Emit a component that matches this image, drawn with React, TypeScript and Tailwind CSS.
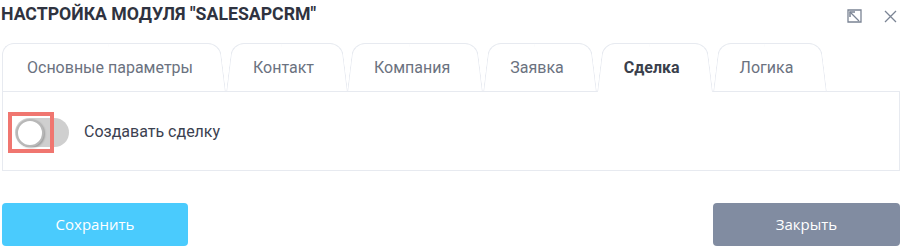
import React from "react";

const tabs = ["Основные параметры", "Контакт", "Компания", "Заявка", "Сделка", "Логика"];
const ACTIVE = 4;

function Tab({ label, index }: { label: string; index: number }) {
  const active = index === ACTIVE;
  const first = index === 0;
  return (
    <div
      className={`relative h-[49px] flex items-center ${first ? "pl-[25px]" : "pl-[27px]"} pr-[33px] ${
        active ? "z-10 bg-white" : ""
      }`}
    >
      <div className="absolute left-0 top-0 bottom-0 w-1/2 pointer-events-none">
        <div
          className={`absolute inset-0 border-l border-t border-[#e7eaf0] rounded-tl-[12px] origin-bottom ${
            first ? "" : "-skew-x-[7deg]"
          } bg-white`}
        />
      </div>
      <div className="absolute right-0 top-0 bottom-0 w-1/2 pointer-events-none">
        <div className="absolute inset-0 border-r border-t border-[#e7eaf0] rounded-tr-[12px] origin-bottom skew-x-[7deg] bg-white" />
      </div>
      {!active && <div className="absolute left-0 right-0 bottom-0 h-px bg-[#e7eaf0]" />}
      <span
        className={`relative text-[16px] leading-none whitespace-nowrap ${
          active ? "font-bold text-[#3a3f4c]" : "text-[#6b7280]"
        }`}
      >
        {label}
      </span>
    </div>
  );
}

export default function App() {
  return (
    <div
      className="w-[902px] h-[249px] bg-white px-[2px] overflow-hidden"
      style={{ fontFamily: "Roboto, 'Noto Sans', sans-serif" }}
    >
      <div className="h-[30px] flex items-center justify-between">
        <div className="text-[17.7px] font-bold text-[#2f3340] leading-none -ml-[1px]">
          НАСТРОЙКА МОДУЛЯ "SALESAPCRM"
        </div>
        <div className="flex items-center gap-[22px] pr-[3px] pt-[2px]">
          <svg width="15" height="14" viewBox="0 0 15 14" fill="none" stroke="#7b8494" strokeWidth="1.3">
            <path d="M1 1H14V13H1Z" />
            <path d="M3 3L12 12" />
            <path d="M3 8V3H8" strokeWidth="1.5" />
          </svg>
          <svg width="13" height="13" viewBox="0 0 13 13" fill="none" stroke="#7b8494" strokeWidth="1.3">
            <path d="M1 1L12 12M12 1L1 12" />
          </svg>
        </div>
      </div>

      <div className="mt-[13px] flex items-end">
        {tabs.map((t, i) => (
          <Tab key={t} label={t} index={i} />
        ))}
        <div className="flex-1 h-px bg-[#e7eaf0]" />
      </div>

      <div className="h-[79px] border border-t-0 border-[#e7eaf0] flex items-center">
        <div className="relative ml-[12px] mt-[2px] w-[54px] h-[29px] rounded-full bg-[#cfcfcf]">
          <div className="absolute left-[1px] top-[1px] w-[28px] h-[28px] rounded-full bg-white border-2 border-[#b8b8b8] shadow-[1px_1px_2px_rgba(0,0,0,0.25)]" />
          <div className="absolute -left-[7px] -top-[6px] w-[46px] h-[41px] border-4 border-[#f07670]" />
        </div>
        <span className="ml-[15px] mt-[1px] text-[16px] text-[#3b4150]">Создавать сделку</span>
      </div>

      <div className="mt-[32px] flex justify-between">
        <button
          className="w-[186px] h-[43px] rounded-[4px] bg-[#4acbfd] text-white text-[15px]"
          style={{ fontFamily: "'Open Sans', sans-serif" }}
        >
          Сохранить
        </button>
        <button
          className="w-[187px] h-[43px] rounded-[4px] bg-[#818ca1] text-white text-[15px]"
          style={{ fontFamily: "'Open Sans', sans-serif" }}
        >
          Закрыть
        </button>
      </div>
    </div>
  );
}
